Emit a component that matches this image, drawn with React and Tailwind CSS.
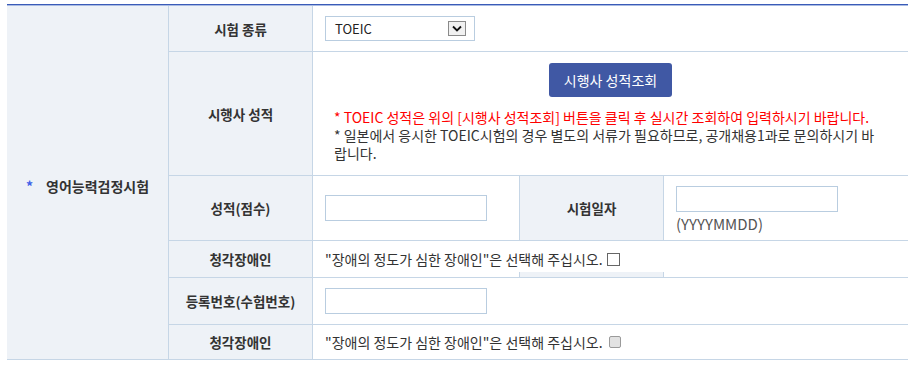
import React from 'react';

const font = { fontFamily: '"Noto Sans CJK KR", "Noto Sans", sans-serif' };

function TextInput() {
    return <div className="w-[162px] h-[26px] border border-[#b9cde0] bg-white" />;
}

export default function App() {
    return (
        <div className="w-[917px] h-[374px] bg-white pt-[4px] pl-[7px] text-[14px] text-[#333]" style={font}>
            <div className="w-[901px] h-px bg-[#3a5bb8]" />
            <div className="w-[901px] h-px bg-[#a9bbe2]" />

            <div className="grid w-[901px] grid-cols-[162px_144px_206px_145px_244px] grid-rows-[46px_124px_65px_37px_47px_35px]">
                {/* 왼쪽 구분 */}
                <div className="row-span-6 col-start-1 row-start-1 bg-[#eef2f7] border-r border-b border-[#c6d6e6] flex items-center justify-center pt-[6px] gap-[13px]">
                    <span className="text-[#4060e8] font-bold leading-[18px] text-[14px]">*</span>
                    <span className="font-bold leading-[18px]">영어능력검정시험</span>
                </div>

                {/* 시험 종류 */}
                <div className="col-start-2 row-start-1 bg-[#eef2f7] border-r border-b border-[#c6d6e6] flex items-center justify-center font-bold leading-[18px] text-[13.5px]">
                    시험 종류
                </div>
                <div className="col-start-3 col-span-3 row-start-1 border-b border-[#c6d6e6] flex items-center pl-[12px]">
                    <div className="w-[150px] h-[25px] border border-[#b9cde0] bg-white flex items-center justify-between pl-[9px] pr-[8px]">
                        <span className="leading-[18px] text-[13px] text-[#222]">TOEIC</span>
                        <div className="w-[18px] h-[15px] border border-[#8a8a8a] bg-[#f1f1f1] flex items-center justify-center">
                            <svg width="10" height="7" viewBox="0 0 10 7">
                                <path d="M1 1.5 L5 5.5 L9 1.5" fill="none" stroke="#111" strokeWidth="1.8" />
                            </svg>
                        </div>
                    </div>
                </div>

                {/* 시행사 성적 */}
                <div className="col-start-2 row-start-2 bg-[#eef2f7] border-r border-b border-[#c6d6e6] flex items-center justify-center font-bold leading-[18px] text-[13.5px]">
                    시행사 성적
                </div>
                <div className="col-start-3 col-span-3 row-start-2 border-b border-[#c6d6e6] flex flex-col pt-[11px]">
                    <div className="flex justify-center">
                        <button className="w-[123px] h-[34px] rounded-[3px] bg-[#4058a4] text-white leading-[18px]">
                            시행사 성적조회
                        </button>
                    </div>
                    <div className="mt-[11px] pl-[21px] pr-[6px] leading-[18px]">
                        <p className="text-[#ff0000]">* TOEIC 성적은 위의 [시행사 성적조회] 버튼을 클릭 후 실시간 조회하여 입력하시기 바랍니다.</p>
                        <p>* 일본에서 응시한 TOEIC시험의 경우 별도의 서류가 필요하므로, 공개채용1과로 문의하시기 바<br />랍니다.</p>
                    </div>
                </div>

                {/* 성적(점수) / 시험일자 */}
                <div className="col-start-2 row-start-3 bg-[#eef2f7] border-r border-b border-[#c6d6e6] flex items-center justify-center font-bold leading-[18px] text-[13.5px]">
                    성적(점수)
                </div>
                <div className="col-start-3 row-start-3 border-b border-[#c6d6e6] flex items-center pl-[12px]">
                    <TextInput />
                </div>
                <div className="col-start-4 row-start-3 bg-[#eef2f7] border-l border-r border-b border-[#c6d6e6] flex items-center justify-center font-bold leading-[18px] text-[13.5px]">
                    시험일자
                </div>
                <div className="col-start-5 row-start-3 border-b border-[#c6d6e6] flex flex-col pl-[12px] pt-[10px]">
                    <TextInput />
                    <span className="mt-[3px] leading-[18px] text-[15px] text-[#555]">(YYYYMMDD)</span>
                </div>

                {/* 청각장애인 */}
                <div className="col-start-2 row-start-4 bg-[#eef2f7] border-r border-b border-[#c6d6e6] flex items-center justify-center font-bold leading-[18px] text-[13.5px]">
                    청각장애인
                </div>
                <div className="col-start-4 row-start-4 self-end h-[6px] bg-[#eef2f7] border-l border-r border-b border-[#c6d6e6]" />
                <div className="col-start-3 col-span-3 row-start-4 border-b border-[#c6d6e6] flex items-center pl-[12px] gap-[4px]">
                    <span className="leading-[18px]">"장애의 정도가 심한 장애인"은 선택해 주십시오.</span>
                    <span className="w-[13px] h-[13px] border border-[#666] bg-white" />
                </div>

                {/* 등록번호 */}
                <div className="col-start-2 row-start-5 bg-[#eef2f7] border-r border-b border-[#c6d6e6] flex items-center justify-center font-bold leading-[18px] text-[13.5px]">
                    등록번호(수험번호)
                </div>
                <div className="col-start-3 col-span-3 row-start-5 border-b border-[#c6d6e6] flex items-center pl-[12px]">
                    <TextInput />
                </div>

                {/* 청각장애인 */}
                <div className="col-start-2 row-start-6 bg-[#eef2f7] border-r border-b border-[#c6d6e6] flex items-center justify-center font-bold leading-[18px] text-[13.5px]">
                    청각장애인
                </div>
                <div className="col-start-3 col-span-3 row-start-6 border-b border-[#c6d6e6] flex items-center pl-[12px] gap-[6px]">
                    <span className="leading-[18px]">"장애의 정도가 심한 장애인"은 선택해 주십시오.</span>
                    <span className="w-[12px] h-[12px] rounded-[2px] border border-[#9a9a9a] bg-[#e2e2e2]" />
                </div>
            </div>
        </div>
    );
}
